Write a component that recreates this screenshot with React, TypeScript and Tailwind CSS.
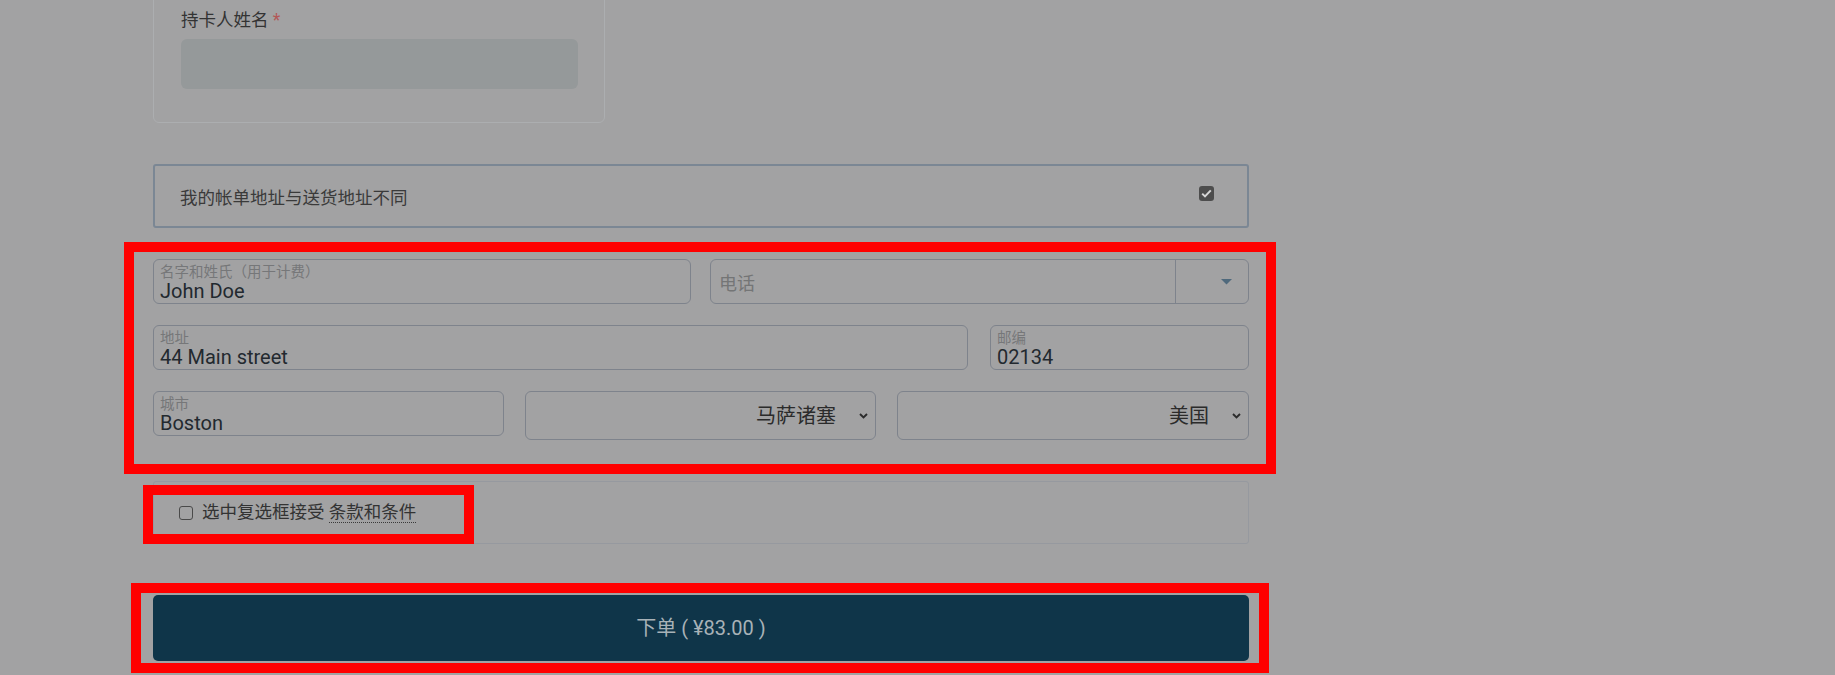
import React from "react"

function Field({ label, value, className }: { label: string; value: string; className: string }) {
  return (
    <div className={`h-[45px] rounded-[6px] border border-[#7e838c] pl-[6px] pt-[5px] ${className}`}>
      <div className="text-[14.5px] leading-[16px] text-[#767779]">{label}</div>
      <div className="text-[20px] leading-[20px] text-[#22292f]">{value}</div>
    </div>
  )
}

function Chevron() {
  return (
    <svg width="9" height="6" viewBox="0 0 9 6" className="shrink-0">
      <path d="M1 1l3.5 3.5L8 1" fill="none" stroke="#2b2b2b" strokeWidth="1.9" />
    </svg>
  )
}

function SelectBox({ value, className }: { value: string; className: string }) {
  return (
    <div
      className={`flex h-[49px] items-center justify-end rounded-[6px] border border-[#7e838c] pr-[7px] ${className}`}
    >
      <span className="mr-[23px] text-[20px] leading-[24px] text-[#2b2b2b]">{value}</span>
      <Chevron />
    </div>
  )
}

function RedMark({ className }: { className: string }) {
  return <div className={`pointer-events-none absolute border-[10px] border-[#ff0000] ${className}`} />
}

export default function App() {
  return (
    <div className="relative h-[675px] w-full overflow-hidden bg-[#a2a2a3] font-[family-name:Roboto,'Noto_Sans_CJK_SC',sans-serif]">
      <div className="ml-[153px] flex w-[1096px] flex-col">
        {/* card holder */}
        <div className="-mt-[16px] w-[452px] rounded-[6px] border border-[#acaeb0] px-[27px] pb-[33px] pt-[23px]">
          <div className="text-[17.5px] leading-[24px] text-[#333]">
            持卡人姓名<span className="text-[#b35757]"> *</span>
          </div>
          <div className="mt-[7px] h-[50px] w-[397px] rounded-[6px] bg-[#95999a]" />
        </div>

        {/* billing toggle */}
        <div className="mt-[41px] flex h-[64px] items-center justify-between rounded-[3px] border-2 border-[#7b8794] pl-[25px] pr-[33px]">
          <span className="pt-[4px] text-[17.5px] text-[#3a3a3a]">我的帐单地址与送货地址不同</span>
          <span className="-mt-[5px] flex h-[15px] w-[15px] items-center justify-center rounded-[3px] bg-[#4d4d4d]">
            <svg width="11" height="9" viewBox="0 0 11 9">
              <path d="M1.2 4.6l2.8 2.8L9.8 1.4" fill="none" stroke="#d6d6d6" strokeWidth="2" />
            </svg>
          </span>
        </div>

        {/* billing fields */}
        <div className="relative mt-[31px] flex flex-col gap-[21px]">
          <div className="flex gap-[19px]">
            <Field className="w-[538px]" label="名字和姓氏（用于计费）" value="John Doe" />
            <div className="flex h-[45px] flex-1 rounded-[6px] border border-[#7e838c]">
              <div className="flex flex-1 items-center pl-[8px] pt-[3px] text-[18px] text-[#747576]">电话</div>
              <div className="flex w-[73px] items-center justify-end border-l border-[#7e838c] pr-[16px]">
                <svg width="11" height="6" viewBox="0 0 11 6">
                  <path d="M0 0h11L5.5 5.5z" fill="#4f697c" />
                </svg>
              </div>
            </div>
          </div>
          <div className="flex gap-[22px]">
            <Field className="w-[815px]" label="地址" value="44 Main street" />
            <Field className="flex-1" label="邮编" value="02134" />
          </div>
          <div className="flex items-start gap-[21px]">
            <Field className="w-[351px]" label="城市" value="Boston" />
            <SelectBox className="w-[351px]" value="马萨诸塞" />
            <SelectBox className="flex-1" value="美国" />
          </div>
          <RedMark className="-bottom-[34px] -left-[29px] -right-[27px] -top-[17px]" />
        </div>

        {/* terms */}
        <div className="relative mt-[41px] flex h-[63px] items-center rounded-[3px] border border-[#96999f] pl-[25px]">
          <span className="h-[14px] w-[14px] rounded-[3px] border-[1.5px] border-[#4a4a4a]" />
          <span className="ml-[9px] text-[17.5px] text-[#333]">
            选中复选框接受{" "}
            <span className="border-b border-dotted border-[#3a3a3a]">条款和条件</span>
          </span>
          <RedMark className="-bottom-[1px] -left-[11px] top-[3px] w-[331px]" />
        </div>

        {/* submit */}
        <div className="relative mt-[51px] flex h-[66px] items-center justify-center rounded-[5px] bg-[#0f3549] text-[20px] text-[#a8b2b7]">
          下单 ( ¥83.00 )
          <RedMark className="-bottom-[12px] -left-[22px] -right-[20px] -top-[12px]" />
        </div>
      </div>
    </div>
  )
}
